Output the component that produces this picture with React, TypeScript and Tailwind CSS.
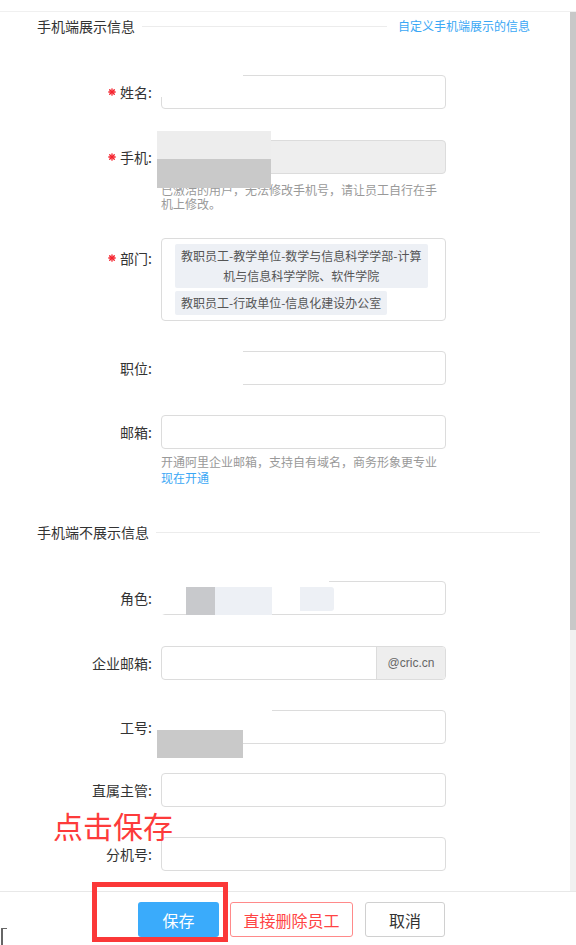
import React from 'react';

const Star = () => (
  <svg width="8" height="8" viewBox="0 0 8 8" className="mr-[4px] shrink-0">
    <g stroke="#f5222d" strokeWidth="1.3" strokeLinecap="round">
      <line x1="4" y1="0.8" x2="4" y2="7.2" />
      <line x1="0.8" y1="4" x2="7.2" y2="4" />
      <line x1="1.7" y1="1.7" x2="6.3" y2="6.3" />
      <line x1="6.3" y1="1.7" x2="1.7" y2="6.3" />
    </g>
  </svg>
);

const Label: React.FC<{ text: string; required?: boolean; top?: boolean }> = ({ text, required, top }) => (
  <div
    className={
      'w-[152px] shrink-0 flex justify-end items-center text-[14px] leading-[20px] text-[#333] ' +
      (top ? 'self-start pt-[10px]' : '')
    }
  >
    {required && <Star />}
    <span>{text}:</span>
  </div>
);

const inputCls = 'w-[285px] h-[34px] border border-[#dcdcdc] rounded-[4px] bg-white';

const Row: React.FC<{ className?: string; children: React.ReactNode }> = ({ className, children }) => (
  <div className={'flex items-center gap-[9px] ' + (className || '')}>{children}</div>
);

const SectionTitle: React.FC<{ title: string; link?: string; className?: string }> = ({ title, link, className }) => (
  <div className={'flex items-center h-[20px] pl-[37px] ' + (className || '')}>
    <span className="text-[14px] text-[#333] whitespace-nowrap">{title}</span>
    <div className="flex-1 h-px bg-[#ececec] ml-[7px] mr-[11px]" />
    {link && <span className="text-[12px] text-[#3aa7f5] whitespace-nowrap">{link}</span>}
  </div>
);

export default function App() {
  return (
    <div className="relative w-[576px] h-[945px] overflow-hidden bg-white font-['Noto_Sans_CJK_SC','Liberation_Sans',sans-serif]">
      <div className="h-[12px] border-b border-[#f0f0f0]" />

      <div className="flex h-[879px]">
        <div className="flex-1">
          <SectionTitle title="手机端展示信息" link="自定义手机端展示的信息" className="mt-[4px] pr-[40px]" />

          {/* 姓名 */}
          <Row className="mt-[39px]">
            <Label text="姓名" required />
            <div className="relative">
              <div className={inputCls} />
              <div className="absolute left-[-4px] top-[-5px] w-[86px] h-[27px] bg-white" />
            </div>
          </Row>

          {/* 手机 */}
          <div className="relative mt-[31px]">
            <Row>
              <Label text="手机" required />
              <div className={inputCls + ' !bg-[#eeeeee]'} />
            </Row>
            <div className="ml-[161px] mt-[9px] w-[286px] text-[12px] leading-[14px] text-[#999]">
              已激活的用户，无法修改手机号，请让员工自行在手机上修改。
            </div>
            <div className="absolute left-[157px] top-[-9px] w-[114px] h-[28px] bg-[#ededed]" />
            <div className="absolute left-[157px] top-[19px] w-[114px] h-[29px] bg-[#c9c9c9]" />
          </div>

          {/* 部门 */}
          <Row className="mt-[27px]">
            <Label text="部门" required top />
            <div className="w-[285px] border border-[#dcdcdc] rounded-[4px] pl-[13px] pt-[5px] pb-[5px]">
              <div className="w-fit bg-[#edf0f5] rounded-[2px] px-[6px] py-[2px] text-[12px] leading-[20px] text-[#555] text-center">
                教职员工-教学单位-数学与信息科学学部-计算
                <br />
                机与信息科学学院、软件学院
              </div>
              <div className="w-fit mt-[3px] bg-[#edf0f5] rounded-[2px] px-[6px] py-[2px] text-[12px] leading-[20px] text-[#555]">
                教职员工-行政单位-信息化建设办公室
              </div>
            </div>
          </Row>

          {/* 职位 */}
          <Row className="mt-[30px]">
            <Label text="职位" />
            <div className="relative">
              <div className={inputCls} />
              <div className="absolute left-[-4px] top-[-5px] w-[86px] h-[44px] bg-white" />
            </div>
          </Row>

          {/* 邮箱 */}
          <Row className="mt-[30px]">
            <Label text="邮箱" />
            <div className={inputCls} />
          </Row>
          <div className="ml-[161px] mt-[5px] text-[12px] leading-[16px]">
            <div className="text-[#999]">开通阿里企业邮箱，支持自有域名，商务形象更专业</div>
            <div className="text-[#3aa7f5]">现在开通</div>
          </div>

          <SectionTitle title="手机端不展示信息" className="mt-[36px] pr-[19px]" />

          {/* 角色 */}
          <Row className="mt-[39px]">
            <Label text="角色" />
            <div className="relative">
              <div className={inputCls} />
              <div className="absolute left-[-4px] top-[-5px] w-[172px] h-[11px] bg-white" />
              <div className="absolute left-[-4px] top-[6px] w-[29px] h-[27px] bg-white" />
              <div className="absolute left-[25px] top-[6px] w-[29px] h-[28px] bg-[#c8c9cc]" />
              <div className="absolute left-[54px] top-[6px] w-[57px] h-[28px] bg-[#edf0f5]" />
              <div className="absolute left-[139px] top-[6px] w-[34px] h-[24px] bg-[#edf0f5] rounded-r-[3px]" />
            </div>
          </Row>

          {/* 企业邮箱 */}
          <Row className="mt-[31px]">
            <Label text="企业邮箱" />
            <div className={inputCls + ' flex overflow-hidden'}>
              <div className="flex-1" />
              <div className="w-[69px] border-l border-[#dcdcdc] bg-[#eeeeee] flex items-center justify-center text-[12px] text-[#666] font-['Liberation_Sans',sans-serif]">
                @cric.cn
              </div>
            </div>
          </Row>

          {/* 工号 */}
          <Row className="mt-[30px]">
            <Label text="工号" />
            <div className="relative">
              <div className={inputCls} />
              <div className="absolute left-[-4px] top-[-6px] w-[115px] h-[26px] bg-white" />
              <div className="absolute left-[-4px] top-[20px] w-[86px] h-[28px] bg-[#c9c9c9]" />
            </div>
          </Row>

          {/* 直属主管 */}
          <Row className="mt-[29px]">
            <Label text="直属主管" />
            <div className={inputCls} />
          </Row>

          {/* 分机号 */}
          <Row className="mt-[30px]">
            <Label text="分机号" />
            <div className={inputCls} />
          </Row>
        </div>

        {/* scrollbar */}
        <div className="w-[6px] flex flex-col">
          <div className="h-[618px] bg-[#c8c8c8]" />
          <div className="flex-1 bg-[#f1f1f1]" />
        </div>
      </div>

      <div className="h-[54px] border-t border-[#e8e8e8] flex items-start pt-[10px] pl-[138px]">
        <button className="w-[81px] h-[35px] rounded-[3px] bg-[#3aabfb] text-white text-[16px]">保存</button>
        <button className="ml-[11px] w-[123px] h-[35px] rounded-[3px] border border-[#ff8a8a] bg-white text-[#f44] text-[16px]">
          直接删除员工
        </button>
        <button className="ml-[12px] w-[80px] h-[35px] rounded-[3px] border border-[#d0d0d0] bg-white text-[#333] text-[16px]">
          取消
        </button>
      </div>

      {/* annotations */}
      <div className="absolute left-[53px] top-[810px] text-[30px] leading-[30px] text-[#fd3b3b] whitespace-nowrap">点击保存</div>
      <div className="absolute left-[92px] top-[882px] w-[136px] h-[60px] border-[5px] border-[#fb3838]" />
      <div className="absolute left-[1px] top-[928px] w-[6px] h-[20px] border-l-2 border-t border-[#666] rounded-tl-[1px]" />
    </div>
  );
}
